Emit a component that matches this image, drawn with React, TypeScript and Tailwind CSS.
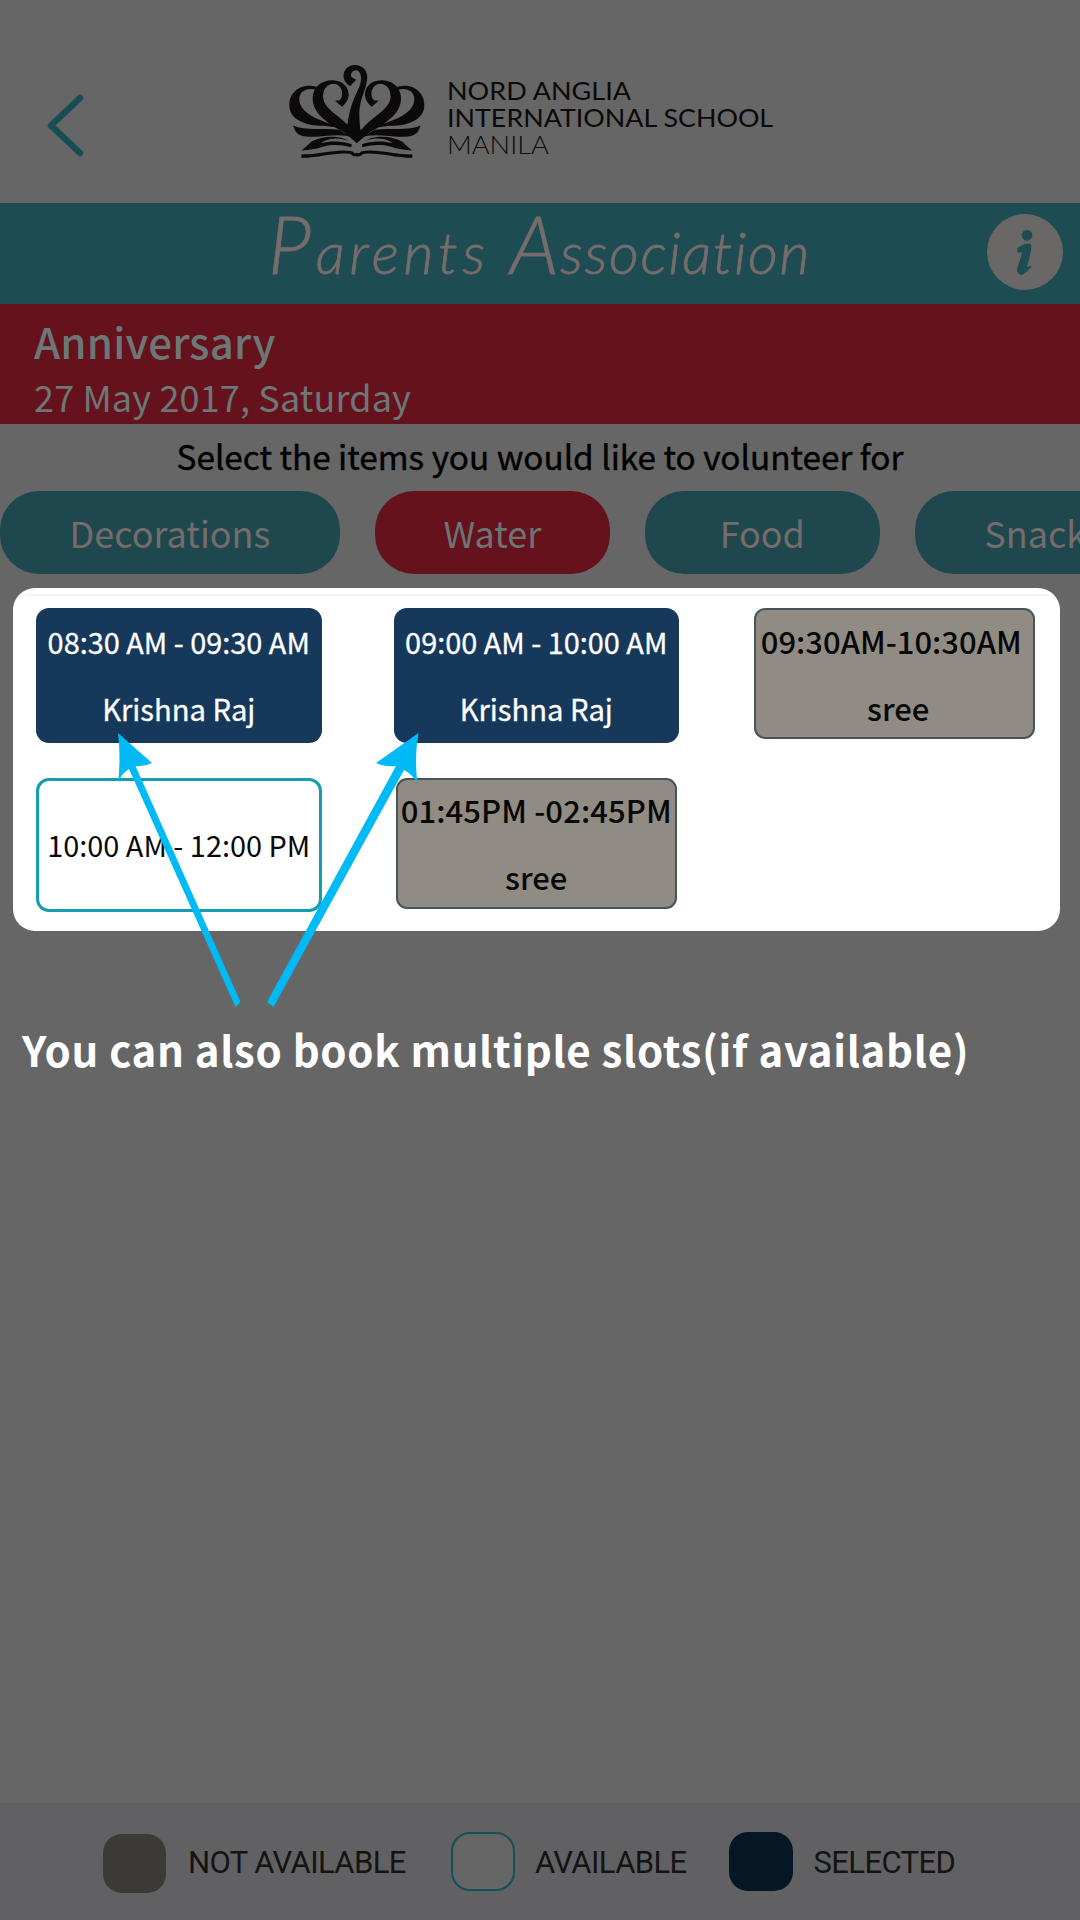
import React from "react";

const cjk = "font-['Noto_Sans_CJK_SC','Noto_Sans',sans-serif]";

function CrestHalf() {
  return (
    <>
      <path d="M138 111 C98 99 57 122 57 166 C57 208 104 228 160 228 L226 236 C160 216 88 196 87 148 C87 126 108 112 137 120 Z" />
      <path d="M260 280 L222 248 C170 220 127 190 127 145 C127 108 158 90 187 91 C216 92 236 110 235 136 C234 153 222 164 215 171 L194 153 C200 150 206 154 211 148 C222 132 213 103 190 102 C168 102 158 122 158 140 C160 180 214 200 242 236 L262 250 Z" />
      <path d="M68 227 C106 243 160 234 206 240 L246 264 C200 240 100 282 76 245 Z" />
      <path d="M94 302 L124 275 C160 254 214 258 236 273 C212 266 190 262 160 274 L152 280 C186 270 226 276 244 283 L243 292 C210 284 186 284 160 290 C136 298 116 300 94 302 Z" />
      <path d="M93 314 C150 314 200 296 244 304 C250 306 250 310 254 310 L262 310 L262 319 L250 319 C244 318 244 313 238 312 C200 306 150 323 93 324 Z" />
    </>
  );
}

function Crest() {
  return (
    <svg viewBox="50 40 420 290" className="mt-[63px] ml-[198.500px] h-[97px] w-[140px] shrink-0 fill-[#0b0909]">
      <CrestHalf />
      <g transform="translate(519 0) scale(-1 1)">
        <CrestHalf />
      </g>
      <path d="M230 246 C232 190 248 152 262 122 C276 96 276 64 258 61 C243 61 238 76 245 83 L258 90 L239 109 C224 100 218 86 220 73 C226 34 290 36 291 82 C290 118 266 148 267 192 C267 216 270 238 271 246 L260 262 Z" />
    </svg>
  );
}

function Header() {
  return (
    <header className="h-[203px]">
      <div className="flex h-[195px] items-start">
        <svg viewBox="0 0 44 72" className="mt-[89px] ml-[44px] h-[72px] w-[44px] shrink-0 fill-none stroke-[#174e54]">
          <path d="M36 9 L7 36.5 L36 64" strokeWidth="6.5" strokeLinecap="round" strokeLinejoin="round" />
        </svg>
        <Crest />
        <div className="mt-[77px] ml-[20px] flex flex-col text-[25px] leading-[27px] whitespace-nowrap text-[#0b0909] font-[Lato,sans-serif]">
          <span className="origin-left scale-x-[1.08]">NORD ANGLIA</span>
          <span className="origin-left scale-x-[1.074]">INTERNATIONAL SCHOOL</span>
          <span className="origin-left scale-x-[1.09] font-light">MANILA</span>
        </div>
      </div>
      <div className="ml-[240px] h-px w-[623px] bg-[#5f6666]" />
    </header>
  );
}

function TitleBar() {
  return (
    <div className="flex h-[101px] justify-between bg-[#1d4c52]">
      <h1 className="ml-[268px] flex h-[101px] text-[58px] leading-[80px] font-light whitespace-nowrap text-[#756c6c] italic [-webkit-text-stroke:0.8px_#756c6c] font-[Lato,sans-serif]">
        <span className="w-[242px] tracking-[4.700px]">
          <span className="text-[80px]">P</span>arents{" "}
        </span>
        <span className="tracking-[1.600px]">
          <span className="text-[80px]">A</span>ssociation
        </span>
      </h1>
      <div className="mt-[10.500px] mr-[17.500px] size-[76px] rounded-full bg-[#6a6767]">
        <svg viewBox="80 56 228 228" className="size-[76px] fill-[#1d4c52]">
          <circle cx="200" cy="120" r="16" />
          <path d="M170 160 C182 150 198 140 212 147 C216 160 206 192 200 214 L215 212 C206 224 194 234 184 240 C174 238 168 228 171 218 C176 200 184 184 184 170 L172 172 Z" />
        </svg>
      </div>
    </div>
  );
}

const pills = [
  { label: "Decorations", cls: "w-[340px] bg-[#1e484e] text-[#756c6c]" },
  { label: "Water", cls: "w-[235px] bg-[#66121d] text-[#6c7575]" },
  { label: "Food", cls: "w-[235px] bg-[#1e484e] text-[#756c6c]" },
  { label: "Snacks", cls: "w-[258px] bg-[#1e484e] text-[#756c6c]" },
];

function Taken({ time, timeCls, nameCls, cls }: { time: string; timeCls: string; nameCls: string; cls: string }) {
  return (
    <div className={"h-[131px] w-[281.5px] rounded-[11px] border-2 border-[#46555a] bg-[#908c84] text-center font-medium text-[#080808] " + cls}>
      <div className={"h-[40px] text-[31px] leading-[40px] whitespace-nowrap " + timeCls}>{time}</div>
      <div className={"mt-[27px] text-[31px] leading-[40px] " + nameCls}>sree</div>
    </div>
  );
}

function Booked({ time }: { time: string }) {
  return (
    <div className="h-[135px] w-[285.500px] rounded-[13px] bg-[#16395b] text-center text-white [-webkit-text-stroke:0.3px_white]">
      <div className="mt-[13px] h-[40px] text-[28.900px] leading-[40px] whitespace-nowrap">{time}</div>
      <div className="mt-[27px] text-[29.200px] leading-[40px]">Krishna Raj</div>
    </div>
  );
}

function Arrows() {
  return (
    <svg viewBox="0 0 320 290" className="pointer-events-none absolute top-[142px] left-[97px] h-[290px] w-[320px] fill-[#00baf6]">
      <path d="M8 3 L42 33 Q34 37 25.500 36 L130.500 272 L125.500 277 L19 39 Q11 44 8 53 Q11 28 8 3 Z" />
      <path d="M308.500 3 L266 33 Q275 37 286 36 L157 272 L163.500 277 L294 40 Q302 44 307.500 53 Q304 28 308.500 3 Z" />
    </svg>
  );
}

function Legend() {
  return (
    <footer className="flex h-[117px] items-start bg-[#616163] text-[31px] leading-[36px] tracking-[-0.600px] whitespace-nowrap text-[#141414] font-[Roboto,sans-serif]">
      <div className="mt-[31px] ml-[103px] h-[59px] w-[63px] rounded-[19px] bg-[#3c3a36]" />
      <span className="mt-[42px] ml-[22px] w-[219px]">NOT AVAILABLE</span>
      <div className="mt-[29px] ml-[43.500px] h-[59px] w-[64px] rounded-[19px] border-2 border-[#135158] bg-[#656565]" />
      <span className="mt-[42px] ml-[20.500px] w-[151px]">AVAILABLE</span>
      <div className="mt-[29px] ml-[43px] h-[59px] w-[64px] rounded-[19px] bg-[#051724]" />
      <span className="mt-[42px] ml-[20.500px]">SELECTED</span>
    </footer>
  );
}

export default function App() {
  return (
    <div className={"flex h-[1920px] w-[1080px] flex-col overflow-hidden bg-[#666666] " + cjk}>
      <Header />
      <TitleBar />
      <section className="h-[120px] bg-[#66121d] pl-[34px] whitespace-nowrap text-[#6c7777]">
        <h2 className="mt-[9px] h-[57px] text-[42px] leading-[56px] font-medium tracking-[0.2px]">Anniversary</h2>
        <p className="text-[36px] leading-[52px] tracking-[0.15px]">27 May 2017, Saturday</p>
      </section>
      <p className="h-[67px] text-center text-[33.300px] leading-[63px] whitespace-nowrap text-black [-webkit-text-stroke:0.4px_black]">
        Select the items you would like to volunteer for
      </p>
      <div className="flex h-[83px] gap-[34.900px] text-[36px] leading-[82px]">
        {pills.map((p) => (
          <div key={p.label} className={"h-[83px] shrink-0 rounded-[39px] text-center " + p.cls}>
            {p.label}
          </div>
        ))}
      </div>
      <main className="relative mt-[14px] ml-[13px] h-[343px] w-[1047px] rounded-[22px] bg-white">
        <div className="absolute top-[6px] right-[12px] left-[12px] h-[2px] bg-[#f3f3f8]" />
        <div className="grid grid-cols-[357.500px_360px_auto] grid-rows-[169.500px_auto] pt-[20px] pl-[23px]">
          <Booked time="08:30 AM - 09:30 AM" />
          <Booked time="09:00 AM - 10:00 AM" />
          <Taken time="09:30AM-10:30AM" timeCls="mt-[11px] mr-[6px]" nameCls="ml-[8px]" cls="" />
          <div className="h-[134px] w-[285.500px] rounded-[13px] border-3 border-[#149db0] text-center text-[28.900px] leading-[127px] whitespace-nowrap text-[#080808]">
            10:00 AM - 12:00 PM
          </div>
          <Taken time="01:45PM -02:45PM" timeCls="mt-[10.500px] tracking-[0.1px]" nameCls="" cls="ml-[2px]" />
        </div>
        <Arrows />
      </main>
      <p className="mt-[86px] ml-[22px] text-[42px] leading-[64px] font-bold tracking-[0.660px] whitespace-nowrap text-white">
        You can also book multiple slots(if available)
      </p>
      <div className="grow" />
      <Legend />
    </div>
  );
}
